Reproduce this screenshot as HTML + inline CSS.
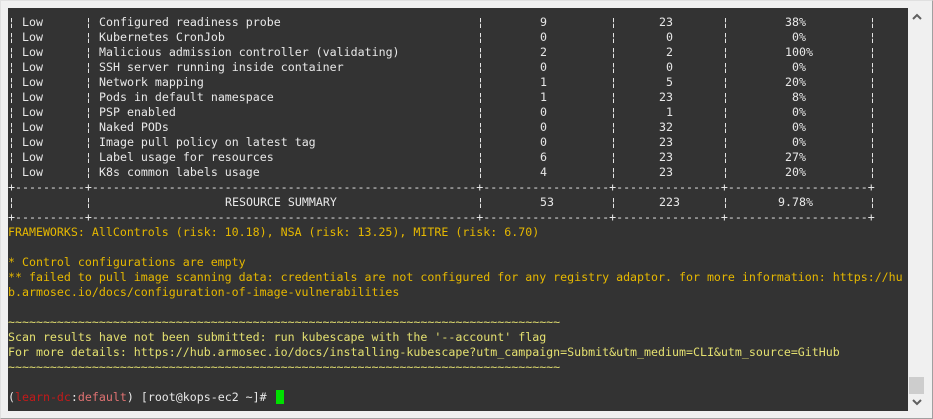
<!DOCTYPE html>
<html><head><meta charset="utf-8"><style>
html,body{margin:0;padding:0;}
body{width:933px;height:419px;background:#f0f0f0;position:relative;overflow:hidden;font-family:"DejaVu Sans Mono","Liberation Mono",monospace;font-size:11.62px;}
#frame{position:absolute;left:0;top:0;width:931px;height:417px;border:1px solid #a0a0a0;border-top-color:#e0e0e0;border-left-color:#e0e0e0;}
#term{position:absolute;left:8px;top:8px;width:900px;height:403px;background:#333333;}
#in{position:absolute;left:0;top:1px;width:900px;height:400px;}
.r{position:absolute;left:0;height:15px;line-height:15px;white-space:pre;width:900px;color:#e8e8e8;}
.r span{position:absolute;top:0;}
.y{color:#e6b800;}
.ly{color:#e4e070;}
#sb{position:absolute;left:908px;top:8px;width:17px;height:403px;background:#f0f0f0;}
#thumb{position:absolute;left:909px;top:377px;width:15px;height:17px;background:#cdcdcd;}
</style></head><body>
<div id="frame"></div>
<div id="term"><div id="in">
<div class="r" style="top:6px"><span style="left:0">¦</span><span style="left:14px">Low</span><span style="left:77px">¦</span><span style="left:91px">Configured readiness probe</span><span style="left:469px">¦</span><span style="left:532px">9</span><span style="left:602px">¦</span><span style="left:651px">23</span><span style="left:714px">¦</span><span style="left:777px">38%</span><span style="left:861px">¦</span></div>
<div class="r" style="top:21px"><span style="left:0">¦</span><span style="left:14px">Low</span><span style="left:77px">¦</span><span style="left:91px">Kubernetes CronJob</span><span style="left:469px">¦</span><span style="left:532px">0</span><span style="left:602px">¦</span><span style="left:658px">0</span><span style="left:714px">¦</span><span style="left:784px">0%</span><span style="left:861px">¦</span></div>
<div class="r" style="top:36px"><span style="left:0">¦</span><span style="left:14px">Low</span><span style="left:77px">¦</span><span style="left:91px">Malicious admission controller (validating)</span><span style="left:469px">¦</span><span style="left:532px">2</span><span style="left:602px">¦</span><span style="left:658px">2</span><span style="left:714px">¦</span><span style="left:777px">100%</span><span style="left:861px">¦</span></div>
<div class="r" style="top:51px"><span style="left:0">¦</span><span style="left:14px">Low</span><span style="left:77px">¦</span><span style="left:91px">SSH server running inside container</span><span style="left:469px">¦</span><span style="left:532px">0</span><span style="left:602px">¦</span><span style="left:658px">0</span><span style="left:714px">¦</span><span style="left:784px">0%</span><span style="left:861px">¦</span></div>
<div class="r" style="top:66px"><span style="left:0">¦</span><span style="left:14px">Low</span><span style="left:77px">¦</span><span style="left:91px">Network mapping</span><span style="left:469px">¦</span><span style="left:532px">1</span><span style="left:602px">¦</span><span style="left:658px">5</span><span style="left:714px">¦</span><span style="left:777px">20%</span><span style="left:861px">¦</span></div>
<div class="r" style="top:81px"><span style="left:0">¦</span><span style="left:14px">Low</span><span style="left:77px">¦</span><span style="left:91px">Pods in default namespace</span><span style="left:469px">¦</span><span style="left:532px">1</span><span style="left:602px">¦</span><span style="left:651px">23</span><span style="left:714px">¦</span><span style="left:784px">8%</span><span style="left:861px">¦</span></div>
<div class="r" style="top:96px"><span style="left:0">¦</span><span style="left:14px">Low</span><span style="left:77px">¦</span><span style="left:91px">PSP enabled</span><span style="left:469px">¦</span><span style="left:532px">0</span><span style="left:602px">¦</span><span style="left:658px">1</span><span style="left:714px">¦</span><span style="left:784px">0%</span><span style="left:861px">¦</span></div>
<div class="r" style="top:111px"><span style="left:0">¦</span><span style="left:14px">Low</span><span style="left:77px">¦</span><span style="left:91px">Naked PODs</span><span style="left:469px">¦</span><span style="left:532px">0</span><span style="left:602px">¦</span><span style="left:651px">32</span><span style="left:714px">¦</span><span style="left:784px">0%</span><span style="left:861px">¦</span></div>
<div class="r" style="top:126px"><span style="left:0">¦</span><span style="left:14px">Low</span><span style="left:77px">¦</span><span style="left:91px">Image pull policy on latest tag</span><span style="left:469px">¦</span><span style="left:532px">0</span><span style="left:602px">¦</span><span style="left:651px">23</span><span style="left:714px">¦</span><span style="left:784px">0%</span><span style="left:861px">¦</span></div>
<div class="r" style="top:141px"><span style="left:0">¦</span><span style="left:14px">Low</span><span style="left:77px">¦</span><span style="left:91px">Label usage for resources</span><span style="left:469px">¦</span><span style="left:532px">6</span><span style="left:602px">¦</span><span style="left:651px">23</span><span style="left:714px">¦</span><span style="left:777px">27%</span><span style="left:861px">¦</span></div>
<div class="r" style="top:156px"><span style="left:0">¦</span><span style="left:14px">Low</span><span style="left:77px">¦</span><span style="left:91px">K8s common labels usage</span><span style="left:469px">¦</span><span style="left:532px">4</span><span style="left:602px">¦</span><span style="left:651px">23</span><span style="left:714px">¦</span><span style="left:777px">20%</span><span style="left:861px">¦</span></div>
<div class="r" style="top:171px">+----------+-------------------------------------------------------+------------------+---------------+--------------------+</div>
<div class="r" style="top:186px"><span style="left:0">¦</span><span style="left:77px">¦</span><span style="left:217px">RESOURCE SUMMARY</span><span style="left:469px">¦</span><span style="left:532px">53</span><span style="left:602px">¦</span><span style="left:651px">223</span><span style="left:714px">¦</span><span style="left:770px">9.78%</span><span style="left:861px">¦</span></div>
<div class="r" style="top:201px">+----------+-------------------------------------------------------+------------------+---------------+--------------------+</div>
<div class="r y" style="top:216px">FRAMEWORKS: AllControls (risk: 10.18), NSA (risk: 13.25), MITRE (risk: 6.70)</div>
<div class="r y" style="top:246px">* Control configurations are empty</div>
<div class="r y" style="top:261px">** failed to pull image scanning data: credentials are not configured for any registry adaptor. for more information: https://hu</div>
<div class="r y" style="top:276px">b.armosec.io/docs/configuration-of-image-vulnerabilities</div>
<div class="r ly" style="top:306px">~~~~~~~~~~~~~~~~~~~~~~~~~~~~~~~~~~~~~~~~~~~~~~~~~~~~~~~~~~~~~~~~~~~~~~~~~~~~~~~</div>
<div class="r ly" style="top:321px">Scan results have not been submitted: run kubescape with the '--account' flag</div>
<div class="r ly" style="top:336px">For more details: https://hub.armosec.io/docs/installing-kubescape?utm_campaign=Submit&amp;utm_medium=CLI&amp;utm_source=GitHub</div>
<div class="r ly" style="top:351px">~~~~~~~~~~~~~~~~~~~~~~~~~~~~~~~~~~~~~~~~~~~~~~~~~~~~~~~~~~~~~~~~~~~~~~~~~~~~~~~</div>
<div class="r" style="top:381px">(<span style="position:static;color:#c41a1a">learn-dc</span>:<span style="position:static;color:#e07272">default</span>) [root@kops-ec2 ~]# </div>
<div style="position:absolute;left:268px;top:381px;width:8px;height:14px;background:#00e000"></div>
</div></div>
<div id="sb"></div>
<div id="thumb"></div>
<svg style="position:absolute;left:912px;top:13px" width="10" height="8"><path d="M1 6 L5 2 L9 6" stroke="#606060" stroke-width="2" fill="none"/></svg>
<svg style="position:absolute;left:912px;top:398px" width="10" height="8"><path d="M1 2 L5 6 L9 2" stroke="#606060" stroke-width="2" fill="none"/></svg>
</body></html>
